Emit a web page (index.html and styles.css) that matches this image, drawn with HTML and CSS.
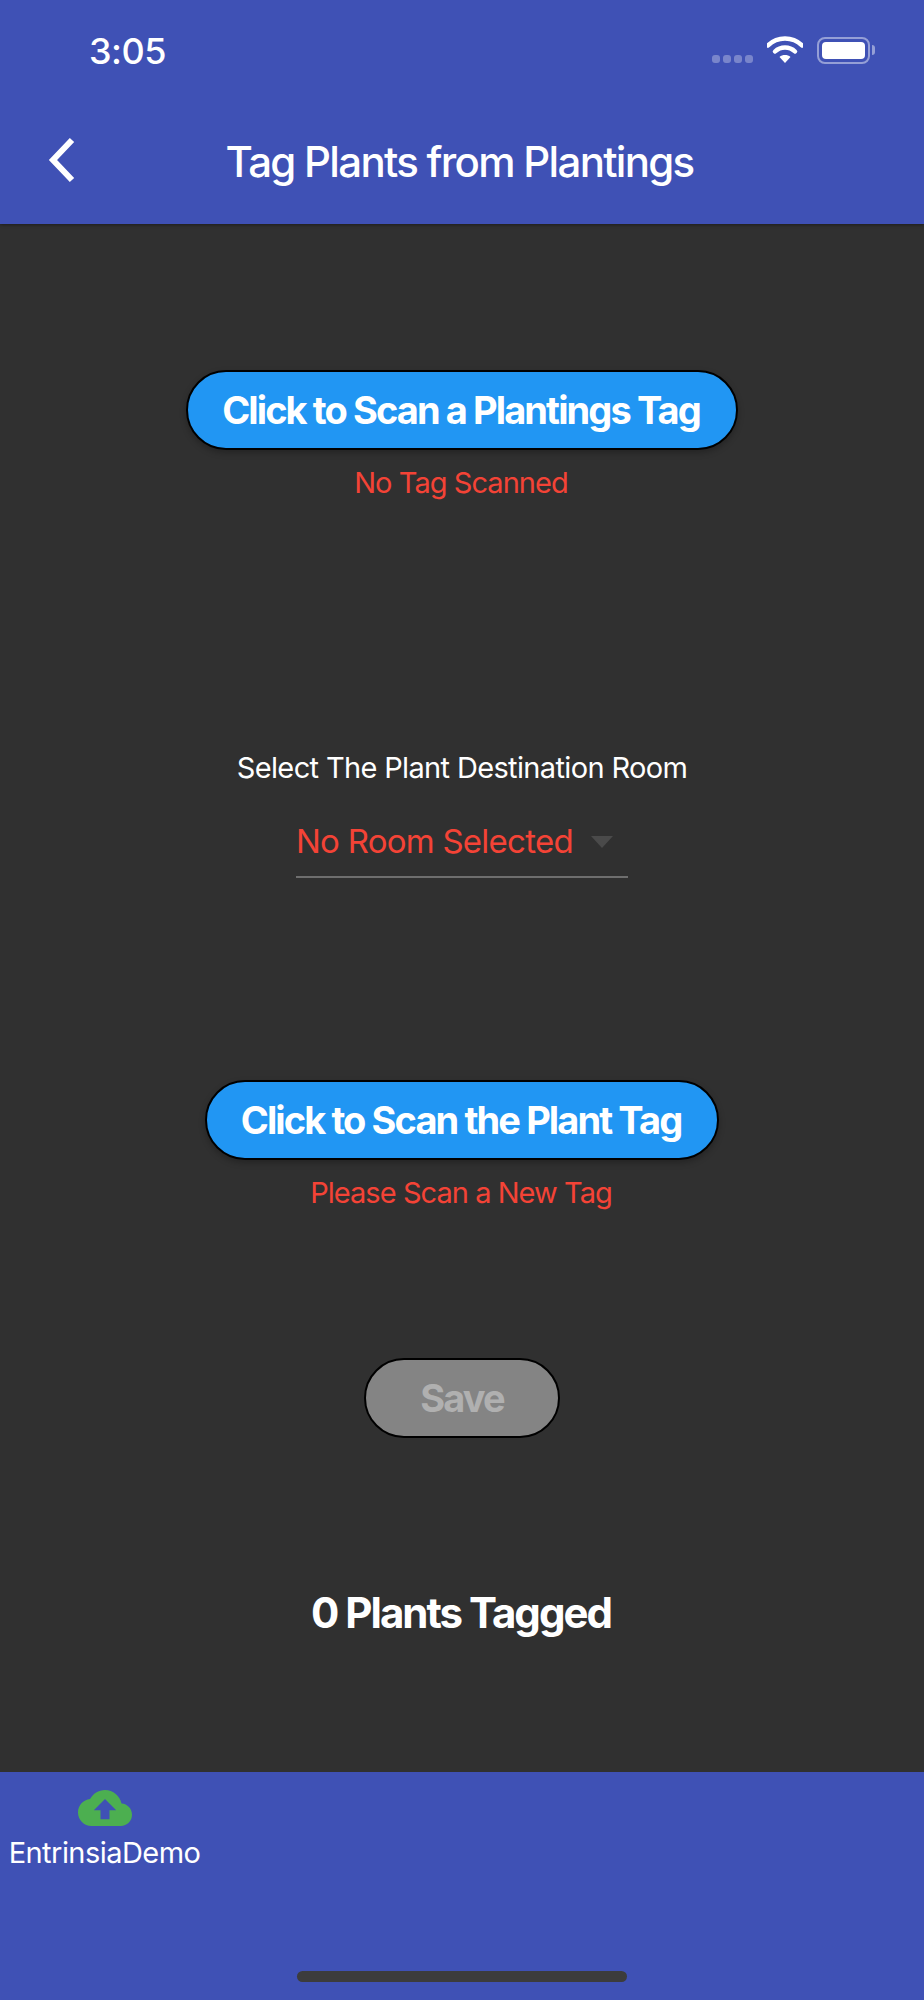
FILE: index.html
```html
<!DOCTYPE html>
<html lang="en">
<head>
    <meta charset="UTF-8">
    <meta name="viewport" content="width=device-width, initial-scale=1.0">
    <title>Tag Plants from Plantings</title>
    <link rel="stylesheet" href="styles.css">
</head>
<body>
    <div class="screen">
        <header class="header">
            <div class="status-bar">
                <span class="time">3:05</span>
                <div class="status-icons">
                    <div class="signal"><i></i><i></i><i></i><i></i></div>
                    <svg class="wifi" viewBox="0 0 36 28" width="36" height="28">
                        <path d="M1 9.5C5.5 5 11.5 2.5 18 2.5S30.500 5 35 9.500" fill="none" stroke="#fff" stroke-width="4.500" stroke-linecap="round"/>
                        <path d="M8 15.500C10.600 13 14 11.500 18 11.500S25.400 13 28 15.500" fill="none" stroke="#fff" stroke-width="4.500" stroke-linecap="round"/>
                        <path d="M12.500 21C14 19.500 16 19 18 19S22 19.500 23.500 21L18 27Z" fill="#fff"/>
                    </svg>
                    <div class="battery"><div class="battery-level"></div></div>
                    <div class="battery-cap"></div>
                </div>
            </div>
            <div class="nav-bar">
                <svg class="back" viewBox="0 0 30 46" width="30" height="46">
                    <path d="M25 3L6 23L25 43" fill="none" stroke="#fff" stroke-width="6"/>
                </svg>
                <h1 class="title">Tag Plants from Plantings</h1>
            </div>
        </header>

        <main class="content">
            <section class="scan scan-first">
                <button class="btn">Click to Scan a Plantings Tag</button>
                <p class="error">No Tag Scanned</p>
            </section>

            <section class="room">
                <label class="room-label">Select The Plant Destination Room</label>
                <div class="picker">
                    <span class="picker-value">No Room Selected</span>
                    <span class="picker-arrow"></span>
                </div>
            </section>

            <section class="scan scan-second">
                <button class="btn">Click to Scan the Plant Tag</button>
                <p class="error">Please Scan a New Tag</p>
            </section>

            <button class="btn btn-save" disabled>Save</button>

            <p class="count">0 Plants Tagged</p>
        </main>

        <footer class="tabs">
            <div class="tab">
                <svg class="tab-icon" viewBox="0 0 24 24" width="54" height="54">
                    <path d="M19.35 10.04C18.67 6.59 15.64 4 12 4 9.11 4 6.6 5.64 5.35 8.04 2.34 8.36 0 10.91 0 14c0 3.31 2.69 6 6 6h13c2.76 0 5-2.24 5-5 0-2.64-2.05-4.78-4.65-4.96zM14 13v4h-4v-4H7l5-5 5 5h-3z" fill="#4caf50"/>
                </svg>
                <span class="tab-label">EntrinsiaDemo</span>
            </div>
            <div class="home-bar"></div>
        </footer>
    </div>
</body>
</html>
```

FILE: styles.css
```css
* {
    box-sizing: border-box;
}
body {
    margin: 0;
    font-family: "Inter", sans-serif;
    background: #303030;
    color: #fff;
}
.screen {
    width: 924px;
    height: 2000px;
    display: flex;
    flex-direction: column;
    overflow: hidden;
}
.header {
    height: 224px;
    background: #3f51b5;
    box-shadow: 0px 1px 3px rgba(0, 0, 0, 0.4);
    position: relative;
}
.status-bar {
    height: 100px;
    padding: 28px 49px 0 89px;
    display: flex;
    justify-content: space-between;
}
.time {
    font-size: 36px;
    line-height: 46px;
    font-weight: 500;
    letter-spacing: -0.5px;
}
.status-icons {
    display: flex;
    align-items: center;
    height: 44px;
}
.signal {
    display: flex;
    gap: 3px;
    margin-top: 18px;
    margin-right: 14px;
}
.signal i {
    width: 8px;
    height: 8px;
    border-radius: 3px;
    background: rgba(255, 255, 255, 0.3);
}
.wifi {
    margin-right: 14px;
}
.battery {
    width: 53px;
    height: 27px;
    padding: 3px;
    border: 2px solid rgba(255, 255, 255, 0.45);
    border-radius: 8px;
}
.battery-level {
    height: 100%;
    background: #fff;
    border-radius: 4px;
}
.battery-cap {
    width: 3px;
    height: 10px;
    margin-left: 2px;
    background: rgba(255, 255, 255, 0.45);
    border-radius: 0 3px 3px 0;
}
.nav-bar {
    height: 124px;
    display: flex;
    align-items: center;
    justify-content: center;
    position: relative;
}
.back {
    position: absolute;
    left: 47px;
    top: 37px;
}
.title {
    margin: 0 5px 0 0;
    font-size: 42px;
    font-weight: 500;
    letter-spacing: -1.7px;
    line-height: 48px;
}
.content {
    flex: 1;
    display: flex;
    flex-direction: column;
    align-items: center;
}
.btn {
    display: block;
    height: 80px;
    padding: 0 36px 0 34px;
    font-family: "Inter", sans-serif;
    font-size: 38px;
    font-weight: 700;
    letter-spacing: -1.9px;
    color: #fff;
    background: #2196f3;
    border: 2px solid #000;
    border-radius: 40px;
    box-shadow: 0px 3px 6px rgba(0, 0, 0, 0.25);
}
.btn-save {
    width: 196px;
    margin-top: 147px;
    padding: 0;
    color: #b0b0b0;
    background: #848484;
    box-shadow: none;
}
.scan {
    display: flex;
    flex-direction: column;
    align-items: center;
}
.scan-first {
    margin-top: 146px;
}
.scan-second {
    margin-top: 202px;
}
.error {
    margin: 15px 2px 0 0;
    font-size: 29px;
    line-height: 36px;
    letter-spacing: -0.95px;
    color: #f44336;
}
.room {
    margin-top: 249px;
    display: flex;
    flex-direction: column;
    align-items: center;
}
.room-label {
    font-size: 29px;
    line-height: 36px;
    letter-spacing: -0.65px;
}
.picker {
    width: 332px;
    height: 72px;
    margin-top: 20px;
    padding-top: 15px;
    display: flex;
    align-items: flex-start;
    border-bottom: 2px solid #6e6e6e;
}
.picker-value {
    font-size: 33px;
    line-height: 40px;
    letter-spacing: -0.75px;
    color: #f44336;
}
.picker-arrow {
    width: 0;
    height: 0;
    margin: 15px 0 0 18px;
    border-left: 11px solid transparent;
    border-right: 11px solid transparent;
    border-top: 12px solid #4a4a4a;
}
.count {
    margin: 151px 2px 0 0;
    font-size: 42px;
    font-weight: 700;
    letter-spacing: -2px;
    line-height: 48px;
}
.tabs {
    height: 228px;
    background: #3f51b5;
    position: relative;
}
.tab {
    width: 209px;
    display: flex;
    flex-direction: column;
    align-items: center;
}
.tab-icon {
    margin-top: 9px;
}
.tab-label {
    margin-top: 0;
    font-size: 29px;
    line-height: 36px;
    letter-spacing: -0.55px;
}
.home-bar {
    position: absolute;
    left: 297px;
    top: 199px;
    width: 330px;
    height: 11px;
    border-radius: 6px;
    background: #3c3c3c;
}
```
